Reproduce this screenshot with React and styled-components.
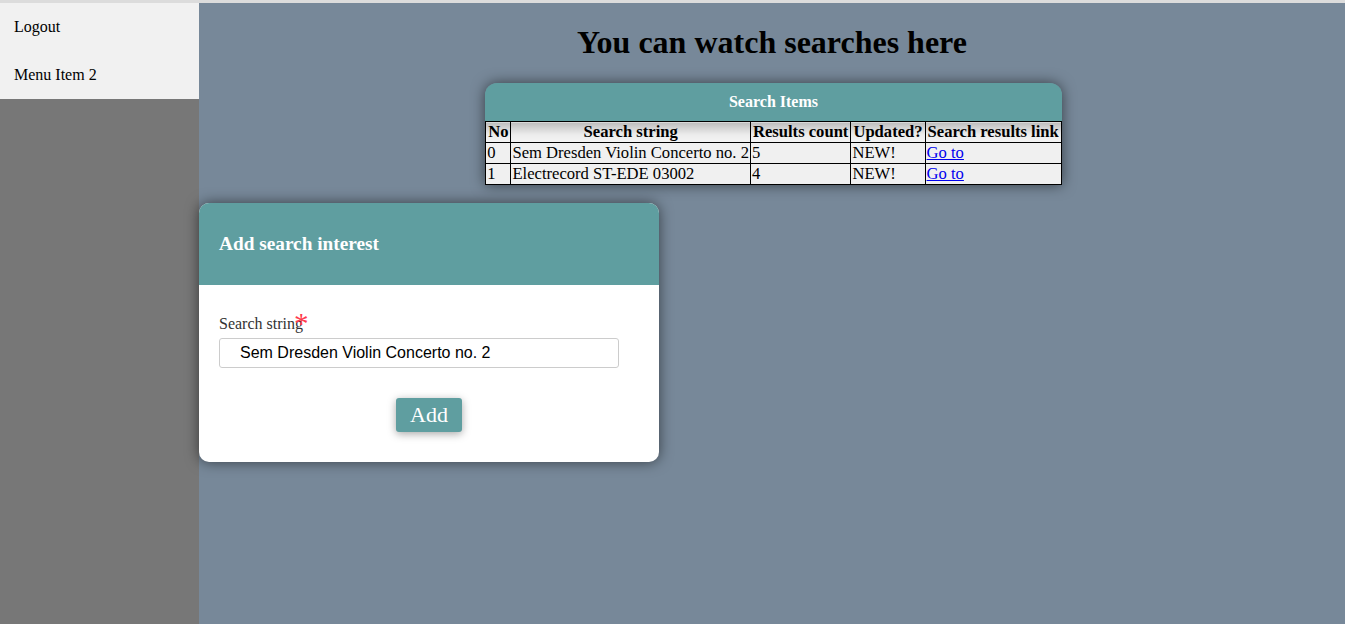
import React, { useState } from 'react';
import styled, { createGlobalStyle } from 'styled-components';

const GlobalStyle = createGlobalStyle`
  html, body {
    margin: 0;
    padding: 0;
    height: 100%;
  }
  body {
    font-family: "Liberation Serif", "Times New Roman", serif;
    font-size: 16px;
  }
  #root {
    height: 100%;
  }
`;

const searches = [
  { no: 0, text: 'Sem Dresden Violin Concerto no. 2', count: 5, updated: 'NEW!' },
  { no: 1, text: 'Electrecord ST-EDE 03002', count: 4, updated: 'NEW!' },
];

const App = () => {
  const [value, setValue] = useState('Sem Dresden Violin Concerto no. 2');

  return (
    <>
      <GlobalStyle />
      <Page>
        <TopLine />
        <Layout>
          <Sidebar>
            <Menu>
              <MenuItem>Logout</MenuItem>
              <MenuItem>Menu Item 2</MenuItem>
            </Menu>
          </Sidebar>
          <Main>
            <Title>You can watch searches here</Title>
            <TableCard>
              <CardCaption>Search Items</CardCaption>
              <Table>
                <thead>
                  <tr>
                    <Th>No</Th>
                    <Th>Search string</Th>
                    <Th>Results count</Th>
                    <Th>Updated?</Th>
                    <Th>Search results link</Th>
                  </tr>
                </thead>
                <tbody>
                  {searches.map((s) => (
                    <tr key={s.no}>
                      <Td>{s.no}</Td>
                      <Td>{s.text}</Td>
                      <Td>{s.count}</Td>
                      <Td>{s.updated}</Td>
                      <Td>
                        <Link href="#">Go to</Link>
                      </Td>
                    </tr>
                  ))}
                </tbody>
              </Table>
            </TableCard>

            <FormCard>
              <FormHeader>
                <FormTitle>Add search interest</FormTitle>
              </FormHeader>
              <FormBody>
                <Label htmlFor="searchString">
                  Search string<Required>*</Required>
                </Label>
                <Input
                  id="searchString"
                  type="text"
                  value={value}
                  onChange={(e) => setValue(e.target.value)}
                />
                <ButtonRow>
                  <AddButton>Add</AddButton>
                </ButtonRow>
              </FormBody>
            </FormCard>
          </Main>
        </Layout>
      </Page>
    </>
  );
};

const Page = styled.div`
  display: flex;
  flex-direction: column;
  height: 100vh;
  overflow: hidden;
`;

const TopLine = styled.div`
  height: 3px;
  background-color: #dcdcdc;
  flex-shrink: 0;
`;

const Layout = styled.div`
  display: flex;
  flex: 1;
`;

const Sidebar = styled.div`
  width: 199px;
  flex-shrink: 0;
  background-color: #777777;
`;

const Menu = styled.div`
  background-color: #f1f1f1;
`;

const MenuItem = styled.div`
  height: 48px;
  line-height: 48px;
  padding-left: 14px;
  color: #000;
  font-size: 16px;
`;

const Main = styled.div`
  flex: 1;
  background-color: #778899;
  display: flex;
  flex-direction: column;
`;

const Title = styled.h1`
  margin: 21px 0 22px;
  font-size: 32px;
  text-align: center;
  color: #000;
`;

const TableCard = styled.div`
  align-self: center;
  width: fit-content;
  border-radius: 12px 12px 0 0;
  box-shadow: 0 0 14px rgba(0, 0, 0, 0.55);
  margin-left: 3px;
`;

const CardCaption = styled.div`
  height: 38px;
  line-height: 38px;
  text-align: center;
  background-color: #5f9ea0;
  color: #fff;
  font-weight: bold;
  font-size: 16px;
  border-radius: 12px 12px 0 0;
`;

const Table = styled.table`
  border-collapse: collapse;
  border: 1px solid #000;
  background-color: #f0f0f0;
  font-size: 16.6px;
  line-height: 18px;
`;

const Th = styled.th`
  border: 1px solid #000;
  padding: 1px 2px;
  background: linear-gradient(to bottom, #bdbdbd 0%, #ececec 60%, #f4f4f4 100%);
  white-space: nowrap;
`;

const Td = styled.td`
  border: 1px solid #000;
  padding: 1px 1px;
  white-space: nowrap;
`;

const Link = styled.a`
  color: #0000ee;
`;

const FormCard = styled.div`
  width: 460px;
  margin-top: 18px;
  background-color: #fff;
  border-radius: 10px;
  box-shadow: 0 0 14px rgba(0, 0, 0, 0.55);
  overflow: hidden;
`;

const FormHeader = styled.div`
  height: 82px;
  background-color: #5f9ea0;
  display: flex;
  align-items: center;
  padding-left: 20px;
`;

const FormTitle = styled.h3`
  margin: 0;
  font-size: 19.3px;
  color: #fff;
`;

const FormBody = styled.div`
  padding: 30px 20px 30px;
`;

const Label = styled.label`
  display: block;
  height: 18px;
  line-height: 18px;
  color: #333;
  font-size: 16px;
`;

const Required = styled.span`
  margin-left: -9px;
  color: #ff3b4e;
  font-size: 29px;
  line-height: 0;
  vertical-align: -4px;
`;

const Input = styled.input`
  display: block;
  box-sizing: border-box;
  width: 400px;
  height: 30px;
  margin-top: 5px;
  padding: 0 0 0 20px;
  border: 1px solid #cccccc;
  border-radius: 3px;
  font-family: "Liberation Sans", Arial, sans-serif;
  font-size: 16px;
  color: #000;
  outline: none;
`;

const ButtonRow = styled.div`
  display: flex;
  justify-content: center;
  margin-top: 30px;
`;

const AddButton = styled.button`
  width: 66px;
  height: 34px;
  padding: 0;
  border: none;
  border-radius: 3px;
  background-color: #5f9ea0;
  color: #fff;
  font-family: "Liberation Serif", "Times New Roman", serif;
  font-size: 22px;
  box-shadow: 0 2px 8px rgba(0, 0, 0, 0.35);
  cursor: pointer;
`;

export default App;
